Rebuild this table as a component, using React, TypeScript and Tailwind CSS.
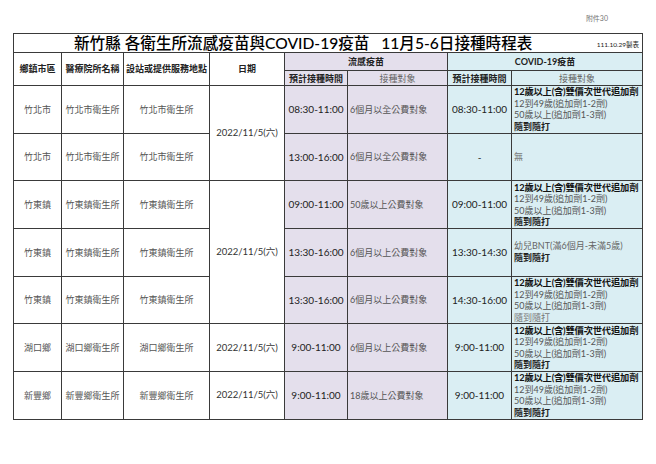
const font = "font-['Lato','Noto_Sans_CJK_TC',sans-serif]";

interface Row {
  town: string;
  clinic: string;
  site: string;
  date?: { text: string; span: number };
  fluTime: string;
  fluTarget: string;
  covidTime: string;
  covid: "full" | "none" | "kids" | "fullLight";
}

const rows: Row[] = [
  { town: "竹北市", clinic: "竹北市衛生所", site: "竹北市衛生所", date: { text: "2022/11/5(六)", span: 2 }, fluTime: "08:30-11:00", fluTarget: "6個月以全公費對象", covidTime: "08:30-11:00", covid: "full" },
  { town: "竹北市", clinic: "竹北市衛生所", site: "竹北市衛生所", fluTime: "13:00-16:00", fluTarget: "6個月以全公費對象", covidTime: "-", covid: "none" },
  { town: "竹東鎮", clinic: "竹東鎮衛生所", site: "竹東鎮衛生所", date: { text: "2022/11/5(六)", span: 3 }, fluTime: "09:00-11:00", fluTarget: "50歲以上公費對象", covidTime: "09:00-11:00", covid: "full" },
  { town: "竹東鎮", clinic: "竹東鎮衛生所", site: "竹東鎮衛生所", fluTime: "13:30-16:00", fluTarget: "6個月以上公費對象", covidTime: "13:30-14:30", covid: "kids" },
  { town: "竹東鎮", clinic: "竹東鎮衛生所", site: "竹東鎮衛生所", fluTime: "13:30-16:00", fluTarget: "6個月以上公費對象", covidTime: "14:30-16:00", covid: "fullLight" },
  { town: "湖口鄉", clinic: "湖口鄉衛生所", site: "湖口鄉衛生所", date: { text: "2022/11/5(六)", span: 1 }, fluTime: "9:00-11:00", fluTarget: "6個月以上公費對象", covidTime: "9:00-11:00", covid: "full" },
  { town: "新豐鄉", clinic: "新豐鄉衛生所", site: "新豐鄉衛生所", date: { text: "2022/11/5(六)", span: 1 }, fluTime: "9:00-11:00", fluTarget: "18歲以上公費對象", covidTime: "9:00-11:00", covid: "full" },
];

const cell = "border border-[#3a3a3a] p-0 align-middle";

const CovidTarget = ({ kind }: { kind: Row["covid"] }) => {
  if (kind === "none") return <div className="pl-[2px] text-[#777]">無</div>;
  if (kind === "kids")
    return (
      <div className="pl-[2px] leading-[12px] whitespace-nowrap">
        <div className="text-[#666]">幼兒BNT(滿6個月-未滿5歲)</div>
        <div className="font-bold text-[#222]">隨到隨打</div>
      </div>
    );
  return (
    <div className="pl-[2px] leading-[11.6px] whitespace-nowrap overflow-hidden">
      <div className="font-bold text-[#111] text-[9.3px] tracking-[-0.2px]">12歲以上(含)雙價次世代追加劑</div>
      <div className="text-[#555]">12到49歲(追加劑1-2劑)</div>
      <div className="text-[#555]">50歲以上(追加劑1-3劑)</div>
      <div className={kind === "fullLight" ? "text-[#777]" : "font-bold text-[#222]"}>隨到隨打</div>
    </div>
  );
};

export default function App() {
  return (
    <div className={`w-[656px] h-[464px] bg-white ${font}`}>
      <div className="h-[33px] flex justify-end items-start pt-[13px] pr-[48px] text-[7px] text-[#777]">附件30</div>
      <table className="ml-[13px] w-[629px] table-fixed border-collapse">
        <colgroup>
          <col className="w-[48px]" />
          <col className="w-[62px]" />
          <col className="w-[86px]" />
          <col className="w-[75px]" />
          <col className="w-[63px]" />
          <col className="w-[100px]" />
          <col className="w-[64px]" />
          <col className="w-[131px]" />
        </colgroup>
        <tbody>
          <tr className="h-[19px]">
            <td colSpan={8} className={cell}>
              <div className="flex items-center">
                <span className="pl-[60px] text-[15.6px] leading-[18px] font-medium text-black whitespace-pre">
                  新竹縣 各衛生所流感疫苗與COVID-19疫苗   11月5-6日接種時程表
                </span>
                <span className="ml-auto pr-[3px] pt-[3px] text-[6.5px] text-[#222]">111.10.29製表</span>
              </div>
            </td>
          </tr>
          <tr className="h-[18px] text-[9px] font-bold text-[#222] text-center">
            <td rowSpan={2} className={cell}>鄉鎮市區</td>
            <td rowSpan={2} className={cell}>醫療院所名稱</td>
            <td rowSpan={2} className={`${cell} whitespace-nowrap`}>設站或提供服務地點</td>
            <td rowSpan={2} className={cell}>日期</td>
            <td colSpan={2} className={`${cell} bg-[#e4dfec]`}>流感疫苗</td>
            <td colSpan={2} className={`${cell} bg-[#daeef3]`}>COVID-19疫苗</td>
          </tr>
          <tr className="h-[15px] text-[9px] leading-[13px] text-center">
            <td className={`${cell} bg-[#e4dfec] font-bold text-[#222]`}>預計接種時間</td>
            <td className={`${cell} bg-[#e4dfec] text-[#666]`}>接種對象</td>
            <td className={`${cell} bg-[#daeef3] font-bold text-[#222]`}>預計接種時間</td>
            <td className={`${cell} bg-[#daeef3] text-[#666]`}>接種對象</td>
          </tr>
          {rows.map((r, i) => (
            <tr key={i} className="h-[47.7px] text-[9px]">
              <td className={`${cell} text-center text-[#555]`}>{r.town}</td>
              <td className={`${cell} text-center text-[#555]`}>{r.clinic}</td>
              <td className={`${cell} text-center text-[#555]`}>{r.site}</td>
              {r.date && (
                <td rowSpan={r.date.span} className={`${cell} text-center text-[9.5px] text-[#333]`}>
                  {r.date.text}
                </td>
              )}
              <td className={`${cell} bg-[#e4dfec] text-center text-[10px] text-[#222]`}>{r.fluTime}</td>
              <td className={`${cell} bg-[#e4dfec] pl-[2px] text-[#555]`}>{r.fluTarget}</td>
              <td className={`${cell} bg-[#daeef3] text-center text-[10px] text-[#222]`}>{r.covidTime}</td>
              <td className={`${cell} bg-[#daeef3]`}>
                <CovidTarget kind={r.covid} />
              </td>
            </tr>
          ))}
        </tbody>
      </table>
    </div>
  );
}
